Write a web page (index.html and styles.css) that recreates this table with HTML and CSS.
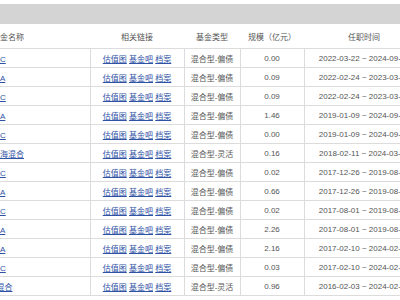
FILE: index.html
```html
<!DOCTYPE html>
<html>
<head>
    <title>基金经理 - 管理过的基金</title>
    <link rel="stylesheet" href="styles.css">
</head>
<body>
    <div class="topbar"></div>
    <table class="funds">
        <colgroup>
            <col class="c-name">
            <col class="c-links">
            <col class="c-type">
            <col class="c-size">
            <col class="c-time">
        </colgroup>
        <thead>
            <tr>
                <th>基金名称</th>
                <th>相关链接</th>
                <th>基金类型</th>
                <th>规模（亿元）</th>
                <th>任职时间</th>
            </tr>
        </thead>
        <tbody id="rows"></tbody>
    </table>

    <script>
        const funds = [
            ['华宝宝康债券增强C', '混合型-偏债', '0.00', '2022-03-22 ~ 2024-09-13'],
            ['华宝新活力灵活配A', '混合型-偏债', '0.09', '2022-02-24 ~ 2023-03-01'],
            ['华宝新活力灵活配C', '混合型-偏债', '0.09', '2022-02-24 ~ 2023-03-01'],
            ['华宝新机遇灵活配A', '混合型-偏债', '1.46', '2019-01-09 ~ 2024-09-13'],
            ['华宝新机遇灵活配C', '混合型-偏债', '0.00', '2019-01-09 ~ 2024-09-13'],
            ['华宝新起点灵活配海混合', '混合型-灵活', '0.16', '2018-02-11 ~ 2024-03-08'],
            ['华宝新优选灵活配C', '混合型-偏债', '0.02', '2017-12-26 ~ 2019-08-02'],
            ['华宝新优选灵活配A', '混合型-偏债', '0.66', '2017-12-26 ~ 2019-08-02'],
            ['华宝新价值灵活配C', '混合型-偏债', '0.02', '2017-08-01 ~ 2019-08-02'],
            ['华宝新价值灵活配A', '混合型-偏债', '2.26', '2017-08-01 ~ 2019-08-02'],
            ['华宝新回报灵活配A', '混合型-偏债', '2.16', '2017-02-10 ~ 2024-02-02'],
            ['华宝新回报灵活配C', '混合型-偏债', '0.03', '2017-02-10 ~ 2024-02-02'],
            ['华宝万物互联1号混合', '混合型-灵活', '0.96', '2016-02-03 ~ 2024-02-02']
        ];

        const tbody = document.getElementById('rows');
        funds.forEach(f => {
            const row = document.createElement('tr');
            row.innerHTML = `
                <td class="name"><a href="#">${f[0]}</a></td>
                <td><a href="#">估值图</a> <a href="#">基金吧</a> <a href="#">档案</a></td>
                <td>${f[1]}</td>
                <td>${f[2]}</td>
                <td>${f[3]}</td>
            `;
            tbody.appendChild(row);
        });
    </script>
</body>
</html>
```

FILE: styles.css
```css
body { margin: 0; font-family: "Liberation Sans", "Noto Sans CJK SC", sans-serif; font-size: 8px; color: #555; background: #fff; overflow: hidden; }
.topbar { height: 20px; margin-top: 4px; background: #d4d4d4; }
.funds { margin-left: -74px; width: 498px; table-layout: fixed; border-collapse: collapse; }
.c-name { width: 164px; }
.c-links { width: 94px; }
.c-type { width: 56px; }
.c-size { width: 64px; }
.c-time { width: 120px; }
th { height: 24px; padding: 0; font-weight: normal; color: #555; text-align: center; border-bottom: 1px solid #dcdcdc; }
td { height: 18px; padding: 0; text-align: center; white-space: nowrap; border-bottom: 1px solid #dcdcdc; border-left: 1px solid #dcdcdc; }
td:first-child { border-left: none; }
td.name { text-align: left; padding-left: 10px; }
a { color: #2f52a5; text-decoration: underline; }
```
